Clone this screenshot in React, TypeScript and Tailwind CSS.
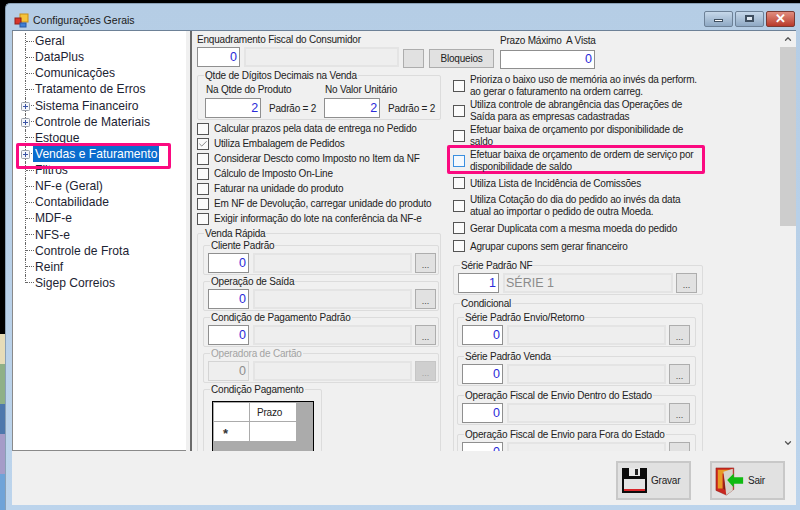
import { ChevronUp, ChevronDown, Check } from 'lucide-react'

const treeItems = [
  { label: 'Geral' },
  { label: 'DataPlus' },
  { label: 'Comunicações' },
  { label: 'Tratamento de Erros' },
  { label: 'Sistema Financeiro', plus: true },
  { label: 'Controle de Materiais', plus: true },
  { label: 'Estoque' },
  { label: 'Vendas e Faturamento', plus: true, selected: true },
  { label: 'Filtros' },
  { label: 'NF-e (Geral)' },
  { label: 'Contabilidade' },
  { label: 'MDF-e' },
  { label: 'NFS-e' },
  { label: 'Controle de Frota' },
  { label: 'Reinf' },
  { label: 'Sigep Correios' },
]

function PlusBox() {
  return (
    <svg width="9" height="9" viewBox="0 0 9 9" className="absolute left-[-5px] top-[4px] z-10">
      <rect x="0.5" y="0.5" width="8" height="8" rx="1" fill="#f4f6fa" stroke="#9aa0a8" />
      <path d="M2 4.5h5M4.5 2v5" stroke="#3b54a5" strokeWidth="1" />
    </svg>
  )
}

function TreeRow({ label, plus, selected, last }: { label: string; plus?: boolean; selected?: boolean; last?: boolean }) {
  return (
    <div className={`relative flex h-[16.13px] items-center ${last ? '' : 'border-l border-dotted border-[#666]'} ${last ? 'ml-[13px]' : 'ml-[12px]'}`}>
      {last && <span className="absolute left-[-1px] top-0 h-[8px] border-l border-dotted border-[#666]" />}
      {plus && <PlusBox />}
      <span className="w-[8px] shrink-0 border-t border-dotted border-[#666]" />
      <span className={`ml-[-1px] px-[2px] text-[12.1px] leading-[16px] whitespace-nowrap ${selected ? 'bg-[#0a6cce] text-white' : 'text-[#1c2333]'}`}>{label}</span>
    </div>
  )
}

function NumInput({ value, w, h = 'h-[20px]', dim }: { value: string; w: string; h?: string; dim?: boolean }) {
  return (
    <div className={`${w} ${h} shrink-0 flex items-center justify-end pr-[2px] text-[12.5px] ${dim ? 'border border-[#d4d4d4] bg-[#eeeeee] text-[#8d8d8d]' : 'border border-[#8f8f8f] bg-white text-[#2a2ad8]'}`}>
      {value}
    </div>
  )
}

function Disabled({ w, text }: { w: string; text?: string }) {
  return (
    <div className={`${w} h-[20px] shrink-0 border-2 border-[#e4e4e4] bg-[#eeeeee] pl-[1px] text-[12.5px] leading-[16px] text-[#8b8b8b]`}>
      {text}
    </div>
  )
}

function DotsButton({ dim }: { dim?: boolean }) {
  return (
    <div className={`flex h-[20px] w-[21px] shrink-0 items-end justify-center border text-[9px] leading-[14px] ${dim ? 'border-[#c6c6c6] bg-[#cfcfcf] text-[#a0a0a0]' : 'border-[#adadad] bg-[#e1e1e1] text-[#444]'}`}>
      ...
    </div>
  )
}

function Group({ label, className, dim, children }: { label: string; className: string; dim?: boolean; children?: React.ReactNode }) {
  return (
    <div className={`rounded-[2px] border border-[#dcdcdc] ${className}`}>
      <div className={`ml-[6px] mt-[-7px] w-fit bg-[#f0f0f0] px-px text-[10px] tracking-[-0.2px] leading-[13px] whitespace-nowrap ${dim ? 'text-[#a3a3a3]' : 'text-[#222]'}`}>
        {label}
      </div>
      {children}
    </div>
  )
}

function LookupGroup({ label, className, dim, value = '0', textW = 'w-[159px]', text }: { label: string; className: string; dim?: boolean; value?: string; textW?: string; text?: string }) {
  return (
    <Group label={label} className={`h-[30px] ${className}`} dim={dim}>
      <div className="mt-[1px] flex items-start pl-[4px]">
        <NumInput value={value} w="w-[41px]" dim={dim} />
        <div className="ml-[4px]"><Disabled w={textW} text={text} /></div>
        <div className="ml-[3px]"><DotsButton dim={dim} /></div>
      </div>
    </Group>
  )
}

function CheckBox({ checked, focus }: { checked?: boolean; focus?: boolean }) {
  return (
    <span className={`flex h-[12px] w-[12px] shrink-0 items-center justify-center border ${focus ? 'border-[#3a8fe0] bg-[#f4f9fe]' : 'border-[#555] bg-[#fbfbfb]'}`}>
      {checked && <Check size={10} strokeWidth={1.5} className="text-[#444]" />}
    </span>
  )
}

function CheckRow({ label, checked, h }: { label: string; checked?: boolean; h: string }) {
  return (
    <div className={`flex ${h} items-center gap-[5px] text-[10px] tracking-[-0.2px] leading-[13px] whitespace-nowrap text-[#222]`}>
      <CheckBox checked={checked} />
      <span>{label}</span>
    </div>
  )
}

function CheckRowWide({ lines, h, mt, focus }: { lines: string[]; h: string; mt: string; focus?: boolean }) {
  return (
    <div className={`relative flex ${h} ${mt} items-center gap-[5px] text-[10px] tracking-[-0.2px] leading-[12px] whitespace-nowrap text-[#222]`}>
      <CheckBox focus={focus} />
      <div>
        {lines.map((l) => (
          <div key={l}>{l}</div>
        ))}
      </div>
    </div>
  )
}

function AppIcon() {
  return (
    <svg width="16" height="16" viewBox="0 0 16 16" className="shrink-0">
      <rect x="6" y="1" width="8" height="8" fill="#f5c33b" stroke="#c98f16" />
      <rect x="1" y="5" width="6" height="6" fill="#d8352a" stroke="#92201a" />
      <rect x="6" y="10" width="6" height="4" fill="#3f7fd6" stroke="#2a5aa5" />
    </svg>
  )
}

function FloppyIcon() {
  return (
    <svg width="27" height="27" viewBox="0 0 27 27" className="shrink-0">
      <path d="M1 1h25v25H1z" fill="#0c0c0c" />
      <rect x="8" y="1" width="11" height="8" fill="#e9e9e9" />
      <rect x="14" y="2" width="3" height="6" fill="#222" />
      <rect x="3" y="12" width="21" height="12" fill="#e4e4e4" />
      <rect x="3" y="22" width="21" height="2" fill="#d8262a" />
    </svg>
  )
}

function DoorIcon() {
  return (
    <svg width="30" height="32" viewBox="0 0 32 32" className="shrink-0">
      <path d="M1 2h19v23l-8 6-11-5z" fill="#c9271f" stroke="#8c1712" strokeWidth="0.5" />
      <path d="M3 4h15v4H8v16H3z" fill="#e79a25" />
      <path d="M9 6l10-3v23l-7 5z" fill="#d6d3cc" />
      <path d="M9 8l2 18-2-2z" fill="#7a2018" />
      <path d="M13 15l7-7v4h10v7H20v4z" fill="#10bb12" />
    </svg>
  )
}

function ActionButton({ label, icon, width }: { label: string; icon: React.ReactNode; width: string }) {
  return (
    <div className={`flex h-[39px] ${width} items-center border-2 border-[#c8c8c8] bg-[#e1e1e1] pl-[3px] text-[10px] tracking-[-0.2px] text-[#222]`}>
      {icon}
      <span className="ml-[3px]">{label}</span>
    </div>
  )
}

export default function App() {
  return (
    <div className="flex h-[510px] w-[800px] overflow-hidden bg-black font-['Liberation_Sans',Arial,sans-serif]">
      {/* desktop behind the window */}
      <div className="flex w-[5px] shrink-0 flex-col">
        <div className="h-[334px] bg-black" />
        <div className="h-[30px] bg-[#e6dcb8]" />
        <div className="h-[40px] bg-[#8fb087]" />
        <div className="h-[30px] bg-[#4e78ac]" />
        <div className="h-[40px] bg-[#a59cc8]" />
        <div className="flex-1 bg-[#6fa3d8]" />
      </div>

      {/* window */}
      <div className="mt-[3px] flex flex-1 flex-col rounded-tl-[5px] border-l border-t border-[#8aa0b5] bg-gradient-to-b from-[#b5cde5] to-[#bcd4ec]">
        <div className="flex h-[26px] shrink-0 items-center pl-[8px] pt-[8px]">
          <AppIcon />
          <span className="ml-[3px] text-[10.5px] text-[#1a1a1a]">Configurações Gerais</span>
          <div className="ml-auto mr-[5px] mt-[-5px] flex gap-[2px]">
            <div className="flex h-[16px] w-[29px] items-center justify-center rounded-[2px] border border-[#6d8197] bg-gradient-to-b from-[#c6d8ea] to-[#8fa9c4]">
              <span className="mt-[3px] h-[3px] w-[9px] border border-[#3f4f60] bg-white" />
            </div>
            <div className="flex h-[16px] w-[29px] items-center justify-center rounded-[2px] border border-[#6d8197] bg-gradient-to-b from-[#c6d8ea] to-[#8fa9c4]">
              <span className="h-[7px] w-[9px] border-2 border-[#3f4f60] bg-[#dfe8f1]" />
            </div>
            <div className="flex h-[16px] w-[29px] items-center justify-center rounded-[2px] border border-[#7a3a33] bg-gradient-to-b from-[#e08d7f] to-[#b8382a] text-[13px] leading-none font-bold text-white">
              ✕
            </div>
          </div>
        </div>

        {/* client */}
        <div className="ml-[6px] mr-[4px] flex h-[475px] shrink-0 flex-col border-t border-[#6d8197] bg-[#f0f0f0]">
          <div className="flex h-[420px] shrink-0">
            {/* tree */}
            <div className="relative w-[174px] shrink-0 border-b border-l border-[#8a8a8a] bg-white pt-[2px]">
              {treeItems.map((it, i) => (
                <TreeRow key={it.label} label={it.label} plus={it.plus} selected={it.selected} last={i === treeItems.length - 1} />
              ))}
              <div className="absolute left-[3px] top-[112px] h-[26px] w-[155px] rounded-[2px] border-[3px] border-[#fb0a80]" />
            </div>

            {/* options panel */}
            <div className="ml-[4px] flex min-w-0 flex-1 border-l-2 border-[#6a6a6a]">
              <div className="min-w-0 flex-1 overflow-hidden pl-[5px]">
                {/* top row */}
                <div className="flex h-[41px] items-start">
                  <div className="w-[232px] pt-[2px]">
                    <div className="text-[10px] tracking-[-0.2px] leading-[13px] text-[#222]">Enquadramento Fiscal do Consumidor</div>
                    <div className="mt-[1px] flex">
                      <NumInput value="0" w="w-[43px]" />
                      <div className="ml-[4px]"><Disabled w="w-[155px]" /></div>
                    </div>
                  </div>
                  <div className="mt-[18px] ml-[-26px] h-[19px] w-[21px] border border-[#adadad] bg-[#e1e1e1]" />
                  <div className="mt-[18px] ml-[5px] flex h-[19px] w-[65px] items-center justify-center border border-[#adadad] bg-[#e1e1e1] text-[10px] tracking-[-0.2px] text-[#222]">Bloqueios</div>
                  <div className="ml-[6px] pt-[3px]">
                    <div className="text-[10px] tracking-[-0.2px] leading-[13px] text-[#222]">Prazo Máximo&nbsp; A Vista</div>
                    <div className="mt-[3px]"><NumInput value="0" w="w-[95px]" h="h-[19px]" /></div>
                  </div>
                </div>

                <div className="flex">
                  {/* left column */}
                  <div className="w-[244px] shrink-0">
                    <Group label="Qtde de Dígitos Decimais na Venda" className="mt-[3px] h-[45px]">
                      <div className="ml-[8px] mt-[1px] flex text-[10px] tracking-[-0.2px] leading-[13px] text-[#222]">
                        <div className="w-[119px]">Na Qtde do Produto</div>
                        <div>No Valor Unitário</div>
                      </div>
                      <div className="ml-[7px] mt-[2px] flex items-center text-[10px] tracking-[-0.2px] text-[#222]">
                        <NumInput value="2" w="w-[56px]" />
                        <span className="ml-[8px] w-[55px]">Padrão = 2</span>
                        <NumInput value="2" w="w-[56px]" />
                        <span className="ml-[8px]">Padrão = 2</span>
                      </div>
                    </Group>

                    <div className="mt-[1px] flex flex-col">
                      <CheckRow label="Calcular prazos pela data de entrega no Pedido" h="h-[15px]" />
                      <CheckRow label="Utiliza Embalagem de Pedidos" checked h="h-[15px]" />
                      <CheckRow label="Considerar Descto como Imposto no Item da NF" h="h-[15px]" />
                      <CheckRow label="Cálculo de Imposto On-Line" h="h-[15px]" />
                      <CheckRow label="Faturar na unidade do produto" h="h-[15px]" />
                      <CheckRow label="Em NF de Devolução, carregar unidade do produto" h="h-[15px]" />
                      <CheckRow label="Exigir informação do lote na conferência da NF-e" h="h-[15px]" />
                    </div>

                    <Group label="Venda Rápida" className="mt-[7px] h-[300px]">
                      <div className="ml-[5px] mr-[1px] mt-[5px] flex flex-col gap-[6px]">
                        <LookupGroup label="Cliente Padrão" className="" />
                        <LookupGroup label="Operação de Saída" className="" />
                        <LookupGroup label="Condição de Pagamento Padrão" className="" />
                        <LookupGroup label="Operadora de Cartão" className="" dim />
                        <Group label="Condição Pagamento" className="h-[120px] w-[119px]">
                          <div className="ml-[8px] mt-[5px] h-[60px] w-[102px] border border-black bg-[#ababab] p-px">
                            <div className="grid grid-cols-[35px_46px] grid-rows-[18px_19px] gap-px">
                              <div className="bg-white" />
                              <div className="flex items-center bg-white pl-[7px] text-[10px] tracking-[-0.2px] text-[#222]">Prazo</div>
                              <div className="flex items-start bg-white pl-[9px] pt-[5px] text-[13px] leading-none font-bold text-[#333]">*</div>
                              <div className="bg-white" />
                            </div>
                          </div>
                        </Group>
                      </div>
                    </Group>
                  </div>

                  {/* right column */}
                  <div className="ml-[12px] w-[260px] shrink-0 pt-[2px]">
                    <CheckRowWide lines={['Prioriza o baixo uso de memória ao invés da perform.', 'ao gerar o faturamento na ordem carreg.']} h="h-[24px]" mt="mt-0" />
                    <CheckRowWide lines={['Utiliza controle de abrangência das Operações de', 'Saída para as empresas cadastradas']} h="h-[24px]" mt="mt-[1px]" />
                    <CheckRowWide lines={['Efetuar baixa de orçamento por disponibilidade de', 'saldo']} h="h-[24px]" mt="mt-[1px]" />
                    <div className="relative mt-px">
                      <div className="absolute left-[-6px] right-[8px] top-[-4px] bottom-[-1px] rounded-[2px] border-[3px] border-[#fb0a80] bg-[#f0f0f0]" />
                      <CheckRowWide lines={['Efetuar baixa de orçamento de ordem de serviço por', 'disponibilidade de saldo']} h="h-[24px]" mt="mt-0" focus />
                    </div>
                    <div className="mt-[2px]"><CheckRow label="Utiliza Lista de Incidência de Comissões" h="h-[16px]" /></div>
                    <CheckRowWide lines={['Utiliza Cotação do dia do pedido ao invés da data', 'atual ao importar o pedido de outra Moeda.']} h="h-[24px]" mt="mt-[3px]" />
                    <div className="mt-[2px]"><CheckRow label="Gerar Duplicata com a mesma moeda do pedido" h="h-[16px]" /></div>
                    <div className="mt-[2px]"><CheckRow label="Agrupar cupons sem gerar financeiro" h="h-[16px]" /></div>

                    <LookupGroup label="Série Padrão NF" value="1" text="SÉRIE 1" textW="w-[170px]" className="mt-[11px] w-[250px]" />

                    <Group label="Condicional" className="mt-[8px] h-[200px] w-[250px]">
                      <div className="ml-[3px] mr-[6px] mt-[7px] flex flex-col gap-[9px]">
                        <LookupGroup label="Série Padrão Envio/Retorno" className="" />
                        <LookupGroup label="Série Padrão Venda" className="" />
                        <LookupGroup label="Operação Fiscal de Envio Dentro do Estado" className="" />
                        <LookupGroup label="Operação Fiscal de Envio para Fora do Estado" className="" />
                      </div>
                    </Group>
                  </div>
                </div>
              </div>

              {/* scrollbar */}
              <div className="flex w-[16px] shrink-0 flex-col items-center bg-[#f0f0f0]">
                <div className="flex h-[16px] items-center justify-center text-[#555]"><ChevronUp size={10} strokeWidth={3} /></div>
                <div className="h-[179px] w-full bg-[#cdcdcd]" />
                <div className="mt-auto flex h-[16px] items-center justify-center text-[#555]"><ChevronDown size={10} strokeWidth={3} /></div>
              </div>
            </div>
          </div>

          {/* footer */}
          <div className="flex flex-1 items-start justify-end gap-[19px] pr-[11px] pt-[10px]">
            <ActionButton label="Gravar" icon={<FloppyIcon />} width="w-[75px]" />
            <ActionButton label="Sair" icon={<DoorIcon />} width="w-[75px]" />
          </div>
        </div>
      </div>
    </div>
  )
}
